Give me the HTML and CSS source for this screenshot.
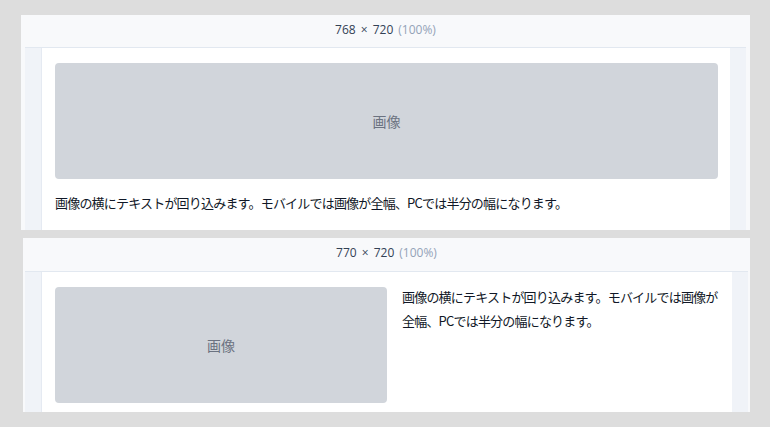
FILE: index.html
```html
<!DOCTYPE html>
<html lang="ja">
  <head>
    <meta charset="UTF-8" />
    <meta name="viewport" content="width=device-width, initial-scale=1.0" />
    <title>回り込みプレビュー</title>
    <link rel="stylesheet" href="styles.css">
  </head>
  <body>
    <div class="preview preview_sp">
      <div class="preview_head">
        <span class="size">768 × 720</span>
        <span class="zoom">(100%)</span>
      </div>
      <div class="preview_frame">
        <div class="page">
          <div class="media">
            <div class="thumb">画像</div>
            <p class="body">画像の横にテキストが回り込みます。モバイルでは画像が全幅、PCでは半分の幅になります。</p>
          </div>
        </div>
      </div>
    </div>
    <div class="preview preview_pc">
      <div class="preview_head">
        <span class="size">770 × 720</span>
        <span class="zoom">(100%)</span>
      </div>
      <div class="preview_frame">
        <div class="page">
          <div class="media">
            <div class="thumb">画像</div>
            <p class="body">画像の横にテキストが回り込みます。モバイルでは画像が全幅、PCでは半分の幅になります。</p>
          </div>
        </div>
      </div>
    </div>
  </body>
</html>
```

FILE: styles.css
```css
* {
  margin: 0;
  padding: 0;
  box-sizing: border-box;
}
body {
  background: #dddddd;
  padding: 15px 20px 0 21px;
  font-family: "Noto Sans CJK JP", "Noto Sans", sans-serif;
  display: flex;
  flex-direction: column;
  gap: 8px;
}
.preview {
  background: #f8f9fb;
  width: 729px;
  overflow: hidden;
  display: flex;
  flex-direction: column;
}
.preview_sp {
  height: 215px;
  padding: 0 4px 0 4px;
}
.preview_pc {
  margin-left: 2px;
  width: 727px;
  height: 174px;
  padding: 0 2px 0 2px;
}
.preview_head {
  height: 33px;
  flex: none;
  display: flex;
  align-items: center;
  justify-content: center;
  gap: 5px;
  padding-bottom: 4px;
  font-family: "Open Sans", "Liberation Sans", sans-serif;
  font-size: 12px;
  border-bottom: 1px solid #e2e8f0;
}
.preview_pc .preview_head {
  height: 34px;
}
.preview_head .size {
  color: #334155;
  word-spacing: 2px;
}
.preview_head .zoom {
  color: #94a3b8;
}
.preview_frame {
  flex: 1;
  background: #f0f3f8;
  padding: 0 16px;
  display: flex;
}
.page {
  flex: 1;
  background: #ffffff;
  border-left: 1px solid #e5eaf2;
  padding: 15px 12px 0 13px;
}
.thumb {
  background: #d1d5db;
  border-radius: 4px;
  color: #6b7280;
  font-size: 14px;
  display: flex;
  align-items: center;
  justify-content: center;
  height: 116px;
}
.body {
  font-size: 13px;
  line-height: 24px;
  letter-spacing: -0.8px;
  color: #111827;
}
.preview_sp .body {
  margin-top: 12px;
}
.preview_pc .media {
  display: flex;
  gap: 15px;
  align-items: flex-start;
}
.preview_pc .thumb {
  width: 332px;
  flex: none;
}
.preview_pc .body {
  flex: 1;
  margin-top: -2px;
}
```
